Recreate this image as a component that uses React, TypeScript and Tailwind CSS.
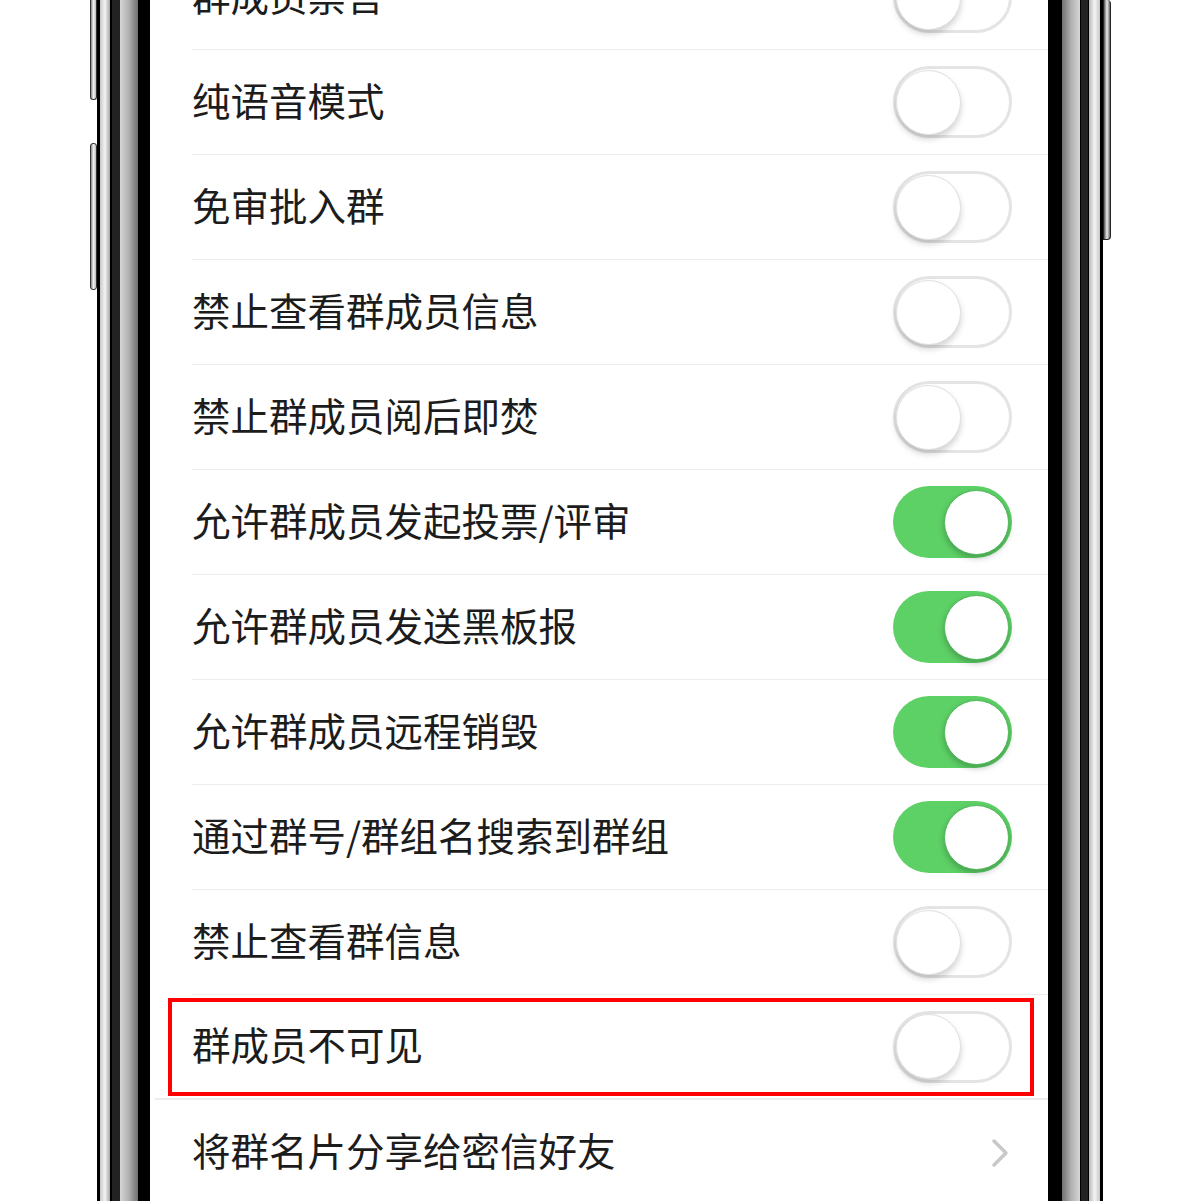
import React from 'react';

type Row = { label: string; on?: boolean; arrow?: boolean };

const rows: Row[] = [
  { label: '群成员禁言' },
  { label: '纯语音模式' },
  { label: '免审批入群' },
  { label: '禁止查看群成员信息' },
  { label: '禁止群成员阅后即焚' },
  { label: '允许群成员发起投票/评审', on: true },
  { label: '允许群成员发送黑板报', on: true },
  { label: '允许群成员远程销毁', on: true },
  { label: '通过群号/群组名搜索到群组', on: true },
  { label: '禁止查看群信息' },
  { label: '群成员不可见' },
  { label: '将群名片分享给密信好友', arrow: true },
];

function Toggle({ on }: { on?: boolean }) {
  if (on) {
    return (
      <div className="w-[119px] h-[72px] rounded-full bg-[#5dd166] flex items-center justify-end pr-[3px] shrink-0">
        <div className="w-[65px] h-[65px] rounded-full bg-white border border-[#4fb858] shadow-[0_3px_6px_rgba(0,0,0,0.25)]" />
      </div>
    );
  }
  return (
    <div className="w-[119px] h-[72px] rounded-full bg-white border-[3px] border-[#e4e4e4] flex items-center shrink-0">
      <div className="w-[65px] h-[65px] rounded-full bg-white border border-[#e0e0e0] shadow-[0_4px_6px_rgba(0,0,0,0.18)]" />
    </div>
  );
}

export default function App() {
  return (
    <div
      className="w-[1200px] h-[1201px] bg-white overflow-hidden flex"
      style={{ fontFamily: '"Noto Sans CJK SC", "Noto Sans", sans-serif' }}
    >
      {/* left margin + side buttons */}
      <div className="w-[90px] shrink-0" />
      <div className="w-[7px] shrink-0 flex flex-col">
        <div className="h-[100px] bg-gradient-to-r from-[#888] via-[#f2f2f2] to-[#bbb] border border-[#333] rounded-b-[3px] border-t-0" />
        <div className="h-[43px]" />
        <div className="h-[147px] bg-gradient-to-r from-[#888] via-[#f2f2f2] to-[#bbb] border border-[#333] rounded-[3px]" />
      </div>
      {/* left frame */}
      <div className="w-[3px] shrink-0 bg-black" />
      <div className="w-[10px] shrink-0 bg-gradient-to-r from-[#c8c8c8] via-[#f4f4f4] to-[#a8a8a8]" />
      <div className="w-[2px] shrink-0 bg-black" />
      <div className="w-[8px] shrink-0 bg-[#222]" />
      <div className="w-[18px] shrink-0 bg-gradient-to-r from-[#d6d6d6] via-[#b0b0b0] to-[#707070]" />
      <div className="w-[12px] shrink-0 bg-black" />

      {/* screen */}
      <div className="w-[898px] shrink-0 bg-white flex flex-col mt-[-55px]">
        {rows.map((r, i) => {
          const lastToggle = i === rows.length - 2;
          return (
            <div key={r.label} className="relative h-[105px] shrink-0 flex flex-col">
              <div className="flex-1 flex items-center pl-[42px] pr-[36px]">
                <span className="flex-1 text-[38.5px] leading-none text-[#1c1c1c] mt-[-6px]">{r.label}</span>
                {r.arrow ? (
                  <svg width="20" height="32" viewBox="0 0 20 32" className="mr-[2px]">
                    <path d="M4 4 L16 16 L4 28" fill="none" stroke="#c8c8c8" strokeWidth="3.5" strokeLinecap="round" strokeLinejoin="round" />
                  </svg>
                ) : (
                  <Toggle on={r.on} />
                )}
              </div>
              {!r.arrow && (
                <div className={lastToggle ? 'h-[2px] bg-[#ececec] ml-[5px]' : 'h-[1px] bg-[#ececec] ml-[42px]'} />
              )}
              {lastToggle && (
                <div className="absolute left-[18px] right-[14px] top-[3px] bottom-[4px] border-[4px] border-[#f00]" />
              )}
            </div>
          );
        })}
      </div>

      {/* right frame */}
      <div className="w-[14px] shrink-0 bg-black" />
      <div className="w-[18px] shrink-0 bg-gradient-to-r from-[#707070] via-[#b0b0b0] to-[#d6d6d6]" />
      <div className="w-[9px] shrink-0 bg-[#222] border-x border-black" />
      <div className="w-[11px] shrink-0 bg-gradient-to-r from-[#b8b8b8] via-[#f4f4f4] to-[#c8c8c8]" />
      <div className="w-[3px] shrink-0 bg-black" />
      <div className="w-[8px] shrink-0 flex flex-col">
        <div className="h-[240px] bg-gradient-to-r from-[#555] via-[#eee] to-[#666] border border-[#222] rounded-r-[4px] border-t-0" />
      </div>
      <div className="flex-1" />
    </div>
  );
}
